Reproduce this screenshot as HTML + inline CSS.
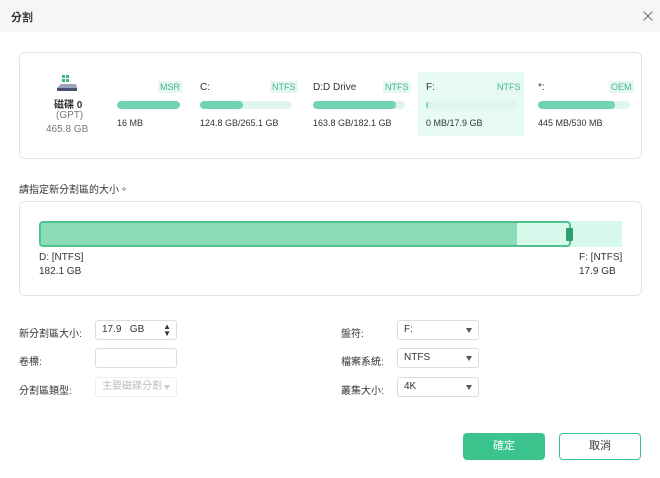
<!DOCTYPE html>
<html><head><meta charset="utf-8"><style>
*{box-sizing:border-box;margin:0;padding:0}
body{width:660px;height:478px;background:#fff;font-family:"Liberation Sans","Noto Sans CJK TC",sans-serif;color:#333;position:relative;overflow:hidden;font-size:10px}
.abs{position:absolute}
.hdr{left:0;top:0;width:660px;height:32px;background:#f5f6f8}
.card{border:1px solid #e1e5ea;border-radius:6px}
.bar{height:8px;border-radius:4px;background:#dff5ee;overflow:hidden}
.bar i{display:block;height:100%;background:#72d3af;border-radius:4px}
.tag{font-size:9px;color:#3fb88c;background:#e6f7f0;padding:1px 2px}
.lbl{font-size:10px;color:#333}
.sm{font-size:9px;color:#333}
.in{border:1px solid #d8dde5;border-radius:3px;height:20px;font-size:10px;padding:0 6px;line-height:18px;color:#333}
.arr{position:absolute;right:6px;top:7px;width:0;height:0;border-left:3px solid transparent;border-right:3px solid transparent;border-top:5px solid #555}
</style></head><body>
<div class="abs hdr"></div>
<div class="abs" style="left:11px;top:9px;font-size:11px;font-weight:bold">分割</div>
<svg class="abs" style="left:643px;top:11px" width="10" height="10"><path d="M0.5 0.5 L9.5 9.5 M9.5 0.5 L0.5 9.5" stroke="#777" stroke-width="1.1"/></svg>

<div class="abs card" style="left:19px;top:52px;width:623px;height:107px"></div>
<svg class="abs" style="left:56px;top:75px" width="22" height="18"><rect x="6" y="0" width="3" height="3" fill="#3cb77c"/><rect x="10" y="0" width="3" height="3" fill="#3cb77c"/><rect x="6" y="4" width="3" height="3" fill="#3cb77c"/><rect x="10" y="4" width="3" height="3" fill="#3cb77c"/><path d="M1 13 L5 9 L20 9 L21 13 Z" fill="#9aa3b8"/><rect x="1" y="13" width="20" height="3" fill="#4a5270"/></svg>
<div class="abs" style="left:54px;top:96px;font-size:10px;font-weight:bold">磁碟 0</div>
<div class="abs" style="left:56px;top:110px;font-size:10px;color:#777">(GPT)</div>
<div class="abs" style="left:46px;top:124px;font-size:10px;color:#777">465.8 GB</div>

<span class="abs tag" style="left:158px;top:81px">MSR</span>
<div class="abs bar" style="left:117px;top:101px;width:63px"><i style="width:100%"></i></div>
<div class="abs sm" style="left:117px;top:118px">16 MB</div>

<div class="abs lbl" style="left:200px;top:82px">C:</div>
<span class="abs tag" style="left:270px;top:81px">NTFS</span>
<div class="abs bar" style="left:200px;top:101px;width:92px"><i style="width:47%"></i></div>
<div class="abs sm" style="left:200px;top:118px">124.8 GB/265.1 GB</div>

<div class="abs lbl" style="left:313px;top:82px">D:D Drive</div>
<span class="abs tag" style="left:383px;top:81px">NTFS</span>
<div class="abs bar" style="left:313px;top:101px;width:92px"><i style="width:90%"></i></div>
<div class="abs sm" style="left:313px;top:118px">163.8 GB/182.1 GB</div>

<div class="abs" style="left:418px;top:72px;width:106px;height:64px;background:#e8fbf3"></div>
<div class="abs lbl" style="left:426px;top:82px">F:</div>
<span class="abs tag" style="left:495px;top:81px">NTFS</span>
<div class="abs bar" style="left:426px;top:101px;width:92px"><i style="width:2%"></i></div>
<div class="abs sm" style="left:426px;top:118px">0 MB/17.9 GB</div>

<div class="abs lbl" style="left:538px;top:82px">*:</div>
<span class="abs tag" style="left:609px;top:81px">OEM</span>
<div class="abs bar" style="left:538px;top:101px;width:92px"><i style="width:84%"></i></div>
<div class="abs sm" style="left:538px;top:118px">445 MB/530 MB</div>

<div class="abs" style="left:19px;top:181px;font-size:10px">請指定新分割區的大小。</div>
<div class="abs card" style="left:19px;top:201px;width:623px;height:95px"></div>
<div class="abs" style="left:569px;top:221px;width:53px;height:26px;background:#d6f9ec"></div>
<div class="abs" style="left:39px;top:221px;width:532px;height:26px;border:2px solid #4fbf8e;border-radius:4px;background:#d6f9ec;overflow:hidden"><div style="width:476px;height:100%;background:#8ddcb9"></div></div>
<div class="abs" style="left:566px;top:228px;width:7px;height:13px;background:#2f9e6e;border-radius:1px"></div>
<div class="abs" style="left:39px;top:252px;font-size:10px">D: [NTFS]</div>
<div class="abs" style="left:39px;top:266px;font-size:10px">182.1 GB</div>
<div class="abs" style="left:579px;top:252px;font-size:10px">F: [NTFS]</div>
<div class="abs" style="left:579px;top:266px;font-size:10px">17.9 GB</div>

<div class="abs lbl" style="left:19px;top:325px">新分割區大小:</div>
<div class="abs in" style="left:95px;top:320px;width:82px">17.9&nbsp;&nbsp;&nbsp;GB<span style="position:absolute;right:5px;top:2px;font-size:8px;line-height:7px">▲<br>▼</span></div>
<div class="abs lbl" style="left:19px;top:353px">卷標:</div>
<div class="abs in" style="left:95px;top:348px;width:82px"></div>
<div class="abs lbl" style="left:19px;top:382px">分割區類型:</div>
<div class="abs in" style="left:95px;top:377px;width:82px;color:#bbb;border-color:#eee">主要磁碟分割<span class="arr" style="border-top-color:#ccc"></span></div>

<div class="abs lbl" style="left:341px;top:325px">盤符:</div>
<div class="abs in" style="left:397px;top:320px;width:82px">F:<span class="arr"></span></div>
<div class="abs lbl" style="left:341px;top:353px">檔案系統:</div>
<div class="abs in" style="left:397px;top:348px;width:82px">NTFS<span class="arr"></span></div>
<div class="abs lbl" style="left:341px;top:382px">叢集大小:</div>
<div class="abs in" style="left:397px;top:377px;width:82px">4K<span class="arr"></span></div>

<div class="abs" style="left:463px;top:433px;width:82px;height:27px;background:#3cc48e;border-radius:4px;color:#fff;font-size:11px;text-align:center;line-height:27px">確定</div>
<div class="abs" style="left:559px;top:433px;width:82px;height:27px;border:1px solid #3cc48e;border-radius:4px;color:#333;font-size:11px;text-align:center;line-height:25px">取消</div>
</body></html>
